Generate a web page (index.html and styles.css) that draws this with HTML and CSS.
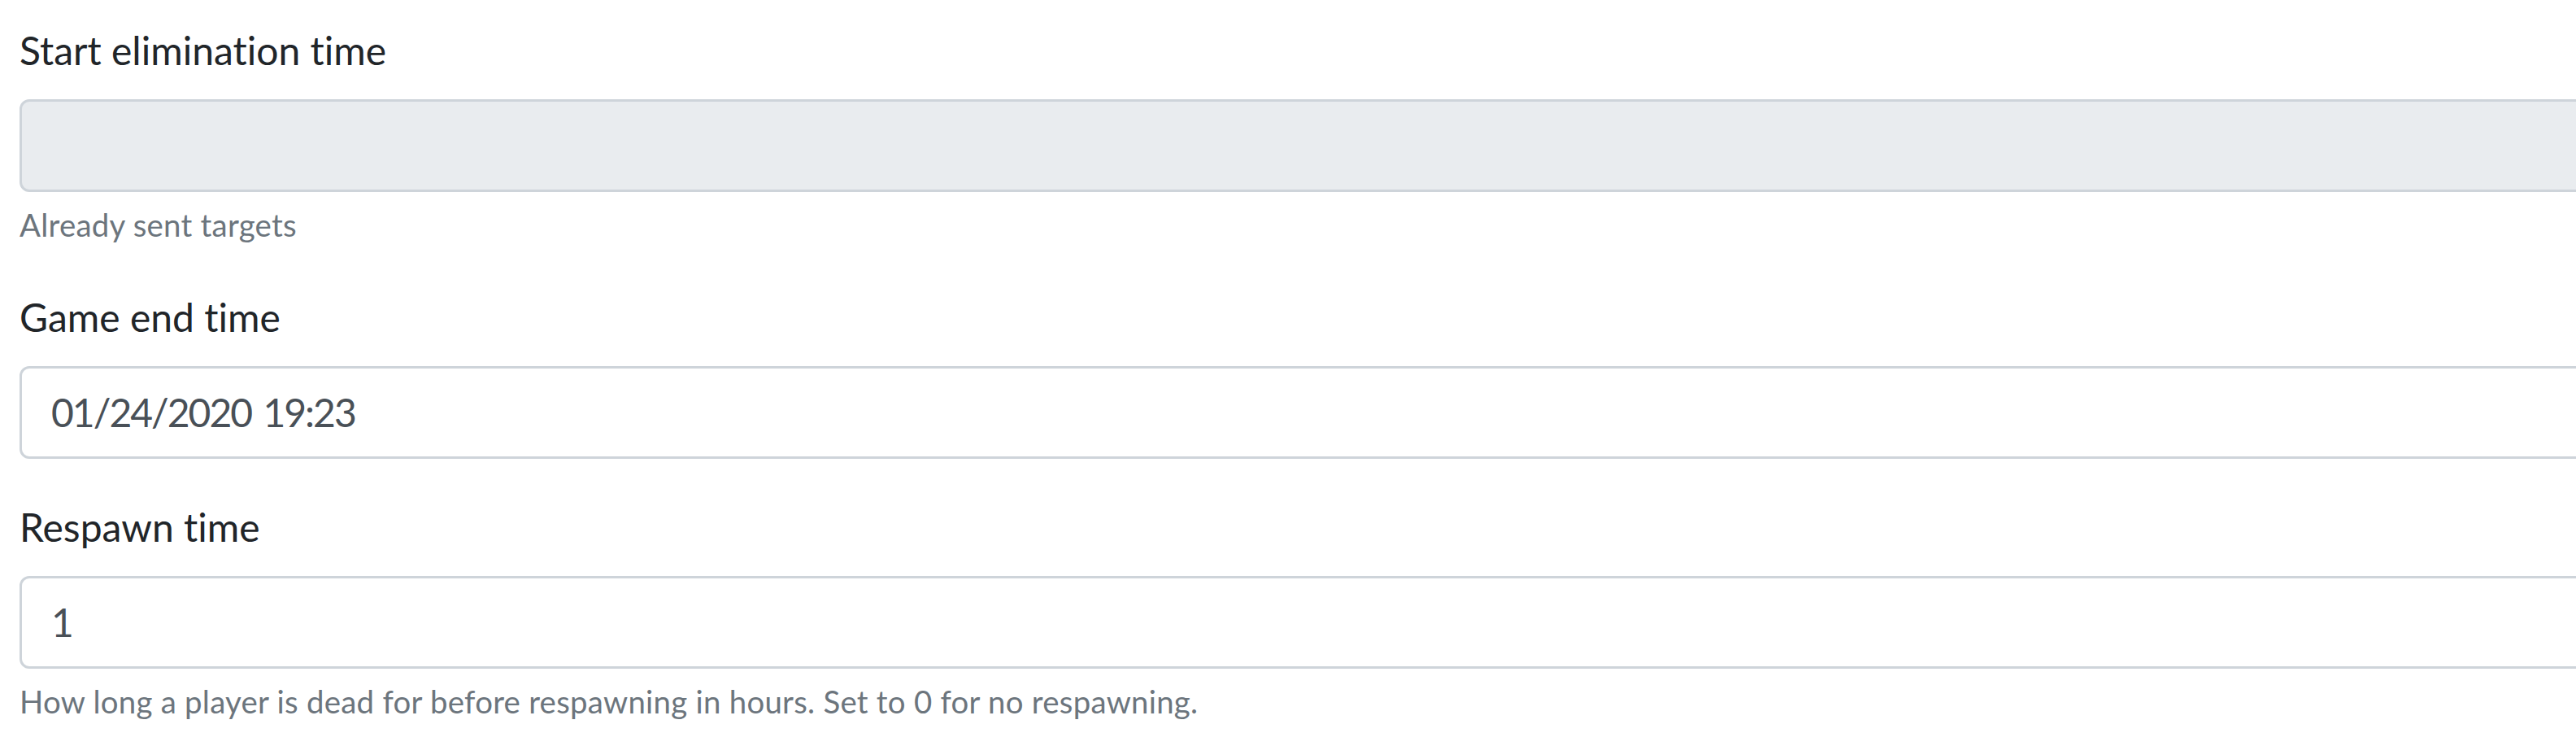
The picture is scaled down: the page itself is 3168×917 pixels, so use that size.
FILE: index.html
```html
<!DOCTYPE html>
<html lang="en">
<head>
<meta charset="utf-8">
<title>Game settings</title>
<link rel="stylesheet" href="styles.css">
</head>
<body>
<div class="page">
  <form class="form">
    <div class="form-group">
      <label class="label" for="start">Start elimination time</label>
      <input class="form-control" id="start" type="text" disabled>
      <small class="help">Already sent targets</small>
    </div>
    <div class="form-group">
      <label class="label" for="end">Game end time</label>
      <input class="form-control" id="end" type="text" value="01/24/2020 19:23">
    </div>
    <div class="form-group">
      <label class="label" for="respawn">Respawn time</label>
      <input class="form-control" id="respawn" type="text" value="1">
      <small class="help">How long a player is dead for before respawning in hours. Set to 0 for no respawning.</small>
    </div>
  </form>
</div>
</body>
</html>
```
FILE: styles.css
```css
html, body {
  margin: 0;
  padding: 0;
  background: #fff;
  overflow: hidden;
}
body {
  font-family: Lato, "Liberation Sans", sans-serif;
  font-size: 48px;
  line-height: 1.5;
  color: #212529;
  font-variant-ligatures: none;
}
.page {
  padding: 26px 0 0 24px;
}
.form {
  width: calc(100% + 60px);
  display: flex;
  flex-direction: column;
}
.form-group {
  display: flex;
  flex-direction: column;
  margin-bottom: 48px;
}
.label {
  display: block;
  margin-bottom: 24px;
  font-size: 48px;
  line-height: 72px;
  color: #212529;
}
.form-control {
  box-sizing: border-box;
  display: block;
  width: 100%;
  height: 114px;
  padding: 18px 36px;
  font-family: inherit;
  font-variant-ligatures: none;
  font-size: 48px;
  line-height: 72px;
  letter-spacing: -2px;
  word-spacing: 4px;
  color: #495057;
  background: #fff;
  border: 3px solid #ced4da;
  border-radius: 12px;
  outline: none;
  margin: 0;
}
.form-control:disabled {
  background: #e9ecef;
}
.help {
  display: block;
  margin-top: 12px;
  font-size: 38.4px;
  line-height: 57.6px;
  letter-spacing: 0.25px;
  color: #6c757d;
}
```
